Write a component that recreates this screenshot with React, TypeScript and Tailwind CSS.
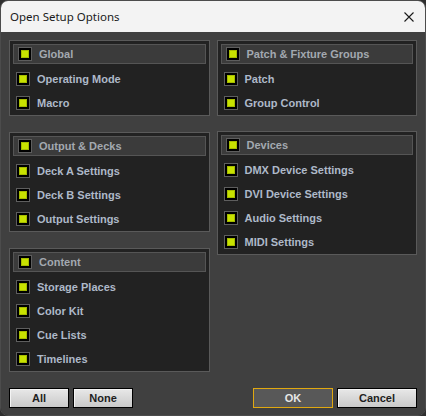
import React from 'react';

interface Group {
    title: string;
    items: string[];
}

const leftGroups: Group[] = [
    { title: 'Global', items: ['Operating Mode', 'Macro'] },
    { title: 'Output & Decks', items: ['Deck A Settings', 'Deck B Settings', 'Output Settings'] },
    { title: 'Content', items: ['Storage Places', 'Color Kit', 'Cue Lists', 'Timelines'] },
];

const rightGroups: Group[] = [
    { title: 'Patch & Fixture Groups', items: ['Patch', 'Group Control'] },
    { title: 'Devices', items: ['DMX Device Settings', 'DVI Device Settings', 'Audio Settings', 'MIDI Settings'] },
];

const font = { fontFamily: '"Liberation Sans", Arial, sans-serif' };

const Check: React.FC = () => (
    <span className="flex w-[14px] h-[14px] shrink-0 items-center justify-center border border-[#5e5e5e] bg-black">
        <span className="block w-[8px] h-[8px] bg-[#c8e200] border border-[#a6bc00]" />
    </span>
);

const Panel: React.FC<{ group: Group }> = ({ group }) => (
    <div className="border border-[#5a5a5a] bg-[#222222] p-[3px] pb-0">
        <div className="flex h-[20px] items-center gap-[7px] border border-[#555555] bg-[#3b3b3b] pl-[4px]">
            <Check />
            <span className="text-[#a3a9b0]">{group.title}</span>
        </div>
        <div className="mt-[3px]">
            {group.items.map((item) => (
                <div key={item} className="flex h-6 items-center gap-[7px] pl-[3px]">
                    <Check />
                    <span className="text-[#aeb9c9]">{item}</span>
                </div>
            ))}
        </div>
    </div>
);

const GrayButton: React.FC<{ label: string; className?: string }> = ({ label, className }) => (
    <button
        className={`h-[20px] border border-black bg-gradient-to-b from-[#e8e8e8] to-[#c9c9c9] text-[#1e1e1e] font-bold text-[11px] shadow-[inset_1px_1px_0_#f4f4f4] ${className ?? ''}`}
        style={font}
    >
        {label}
    </button>
);

export default function App() {
    return (
        <div className="w-[426px] h-[416px] bg-[#2e2e2e]">
            <div className="flex h-full w-full flex-col overflow-hidden rounded-lg border border-[#4c4c4c]">
                <div className="flex h-[31px] shrink-0 items-center justify-between bg-[#f3f3f3] pl-[9px] pr-[11px]">
                    <span className="text-[11.5px] text-[#1a1a1a]" style={{ fontFamily: '"Noto Sans", sans-serif' }}>
                        Open Setup Options
                    </span>
                    <svg width="10" height="10" viewBox="0 0 10 10">
                        <path d="M0.5 0.5 L9.5 9.5 M9.5 0.5 L0.5 9.5" stroke="#1a1a1a" strokeWidth="1.1" />
                    </svg>
                </div>
                <div className="flex flex-1 flex-col bg-[#404040] px-[8px] pt-[8px]">
                    <div className="grid grid-cols-2 gap-x-[7px] text-[11px] font-bold" style={font}>
                        <div className="flex flex-col gap-[16px]">
                            {leftGroups.map((g) => (
                                <Panel key={g.title} group={g} />
                            ))}
                        </div>
                        <div className="flex flex-col gap-[15px]">
                            {rightGroups.map((g) => (
                                <Panel key={g.title} group={g} />
                            ))}
                        </div>
                    </div>
                    <div className="mt-[16px] flex items-center">
                        <GrayButton label="All" className="w-[60px]" />
                        <GrayButton label="None" className="ml-[4px] w-[60px]" />
                        <button
                            className="ml-auto h-[20px] w-[80px] border border-[#e0a810] bg-[#585858] text-[11px] font-bold text-[#e6e6e6]"
                            style={font}
                        >
                            OK
                        </button>
                        <GrayButton label="Cancel" className="ml-[4px] w-[80px]" />
                    </div>
                </div>
            </div>
        </div>
    );
}
